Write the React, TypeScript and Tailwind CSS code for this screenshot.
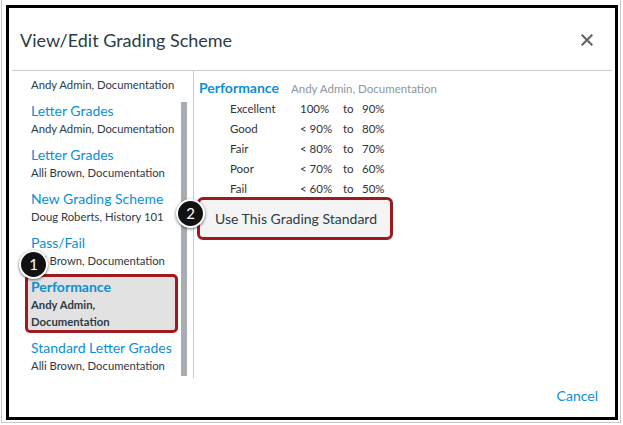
import React from "react";

type Scheme = {
  title?: string;
  owner: string;
  selected?: boolean;
};

const schemes: Scheme[] = [
  { owner: "Andy Admin, Documentation" },
  { title: "Letter Grades", owner: "Andy Admin, Documentation" },
  { title: "Letter Grades", owner: "Alli Brown, Documentation" },
  { title: "New Grading Scheme", owner: "Doug Roberts, History 101" },
  { title: "Pass/Fail", owner: "Alli Brown, Documentation" },
  { title: "Performance", owner: "Andy Admin, Documentation", selected: true },
  { title: "Standard Letter Grades", owner: "Alli Brown, Documentation" },
];

const rows = [
  { name: "Excellent", from: "100%", to: "90%" },
  { name: "Good", from: "< 90%", to: "80%" },
  { name: "Fair", from: "< 80%", to: "70%" },
  { name: "Poor", from: "< 70%", to: "60%" },
  { name: "Fail", from: "< 60%", to: "50%" },
];

function Callout({ n, className }: { n: string; className: string }) {
  return (
    <div
      className={`absolute flex h-[29px] w-[29px] items-center justify-center rounded-full border-2 border-white bg-[#111] text-[15px] leading-none text-white shadow-[0_1px_3px_rgba(0,0,0,0.6)] ${className}`}
    >
      {n}
    </div>
  );
}

export default function App() {
  return (
    <div
      className="relative h-[425px] w-[623px] bg-white"
      style={{ fontFamily: "Lato, 'Open Sans', sans-serif" }}
    >
      <div className="ml-[1px] h-[423px] w-[620px] border border-t-0 border-[#c8c8c8] pl-[4px] pt-[5px]">
        <div className="flex h-[415px] w-[612px] flex-col border-[3px] border-black text-[#2d3b45]">
          <div className="mx-[3px] flex h-[63px] shrink-0 items-center justify-between border-b border-[#c7cdd1] pl-[8px] pr-[19px] pt-[2px]">
            <h1 className="text-[18px] leading-none">View/Edit Grading Scheme</h1>
            <svg width="12" height="12" viewBox="0 0 12 12" className="text-[#666]">
              <path d="M1.5 1.5 10.5 10.5 M10.5 1.5 1.5 10.5" stroke="currentColor" strokeWidth="2.2" strokeLinecap="square" />
            </svg>
          </div>

          <div className="relative mx-[3px] flex h-[307px] shrink-0">
            <div className="relative w-[181px] shrink-0 overflow-hidden pl-[13px] pt-[2px]">
              <div className="flex flex-col gap-[2px]">
                {schemes.map((s, i) => (
                  <div
                    key={i}
                    className={`w-[153px] rounded-[5px] border-[3px] px-[3px] ${
                      s.selected ? "border-[#9e1a1e] bg-[#e2e2e2]" : "border-transparent"
                    }`}
                  >
                    {s.title && (
                      <div
                        className={`whitespace-nowrap text-[14px] leading-[19px] text-[#0a8fd8] ${s.selected ? "font-bold" : ""}`}
                      >
                        {s.title}
                      </div>
                    )}
                    <div className={`text-[11.3px] leading-[17px] ${s.selected ? "w-[110px] font-bold" : "whitespace-nowrap"}`}>
                      {s.owner}
                    </div>
                  </div>
                ))}
              </div>
              <div className="absolute left-[169px] top-[31px] h-[274px] w-[6px] bg-[#a7adb1]" />
            </div>
            <div className="w-px shrink-0 bg-[#c7cdd1]" />
            <div className="pl-[5px] pt-[7px]">
              <div className="flex items-baseline gap-[12px] leading-[20px]">
                <span className="text-[14px] font-bold text-[#0a8fd8]">Performance</span>
                <span className="text-[11.5px] text-[#8b969e]">Andy Admin, Documentation</span>
              </div>
              <div className="pl-[31px] text-[11.5px] leading-[20px] text-[#333]">
                {rows.map((r) => (
                  <div key={r.name} className="grid grid-cols-[70px_43px_19px_auto]">
                    <span>{r.name}</span>
                    <span>{r.from}</span>
                    <span>to</span>
                    <span>{r.to}</span>
                  </div>
                ))}
              </div>
              <button className="-ml-[2px] -mt-[2px] flex h-[43px] w-[196px] items-center rounded-[6px] border-[3px] border-[#9e1a1e] bg-[#f4f4f4] pl-[15px] text-[14px] text-[#2d3b45]">
                Use This Grading Standard
              </button>
            </div>
          </div>

          <div className="flex flex-1 items-center justify-end pb-[4px] pr-[17px]">
            <span className="text-[14px] text-[#0a8fd8]">Cancel</span>
          </div>
        </div>
      </div>

      <Callout n="1" className="left-[19px] top-[250px]" />
      <Callout n="2" className="left-[176px] top-[199px]" />
    </div>
  );
}
